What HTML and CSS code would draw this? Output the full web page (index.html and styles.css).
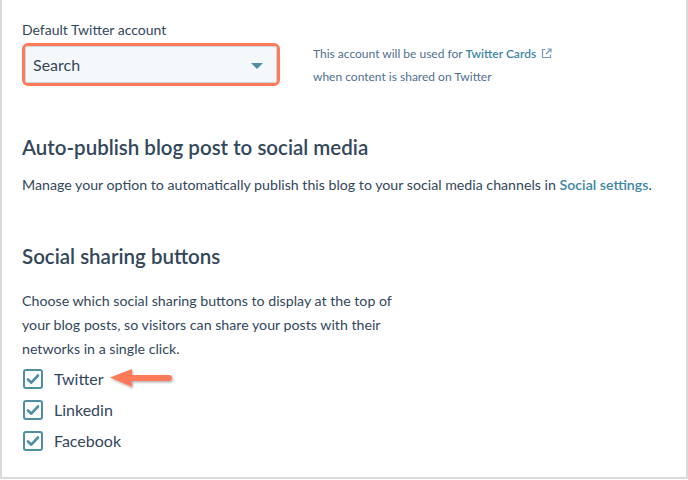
FILE: index.html
```html
<!DOCTYPE html>
<html>
<head>
<meta charset="utf-8">
<link rel="stylesheet" href="styles.css">
</head>
<body>
<div class="panel">
  <div class="account-row">
    <div class="field">
      <label class="field-label">Default Twitter account</label>
      <div class="select-wrap">
        <div class="select">
          <span>Search</span>
          <span class="caret"></span>
        </div>
      </div>
    </div>
    <div class="help">
      <p>This account will be used for <a class="link">Twitter Cards</a>
        <svg class="ext" width="11" height="11" viewBox="0 0 11 11"><path d="M4.5 1.5H1.5v8h8v-3" fill="none" stroke="#7c98b6" stroke-width="1.2"/><path d="M6.5 1h3.5v3.5M10 1L5 6" fill="none" stroke="#7c98b6" stroke-width="1.2"/></svg></p>
      <p>when content is shared on Twitter</p>
    </div>
  </div>

  <section class="section">
    <h2>Auto-publish blog post to social media</h2>
    <p class="body">Manage your option to automatically publish this blog to your social media channels in <a class="link strong">Social settings</a>.</p>
  </section>

  <section class="section social">
    <h2>Social sharing buttons</h2>
    <p class="body narrow">Choose which social sharing buttons to display at the top of your blog posts, so visitors can share your posts with their networks in a single click.</p>
    <ul class="checks">
      <li class="check-row">
        <span class="box"><svg width="14" height="12" viewBox="0 0 14 12"><path d="M2 6.5l3.3 3.2L12 2.5" fill="none" stroke="#4f8fa6" stroke-width="2.6" stroke-linecap="round" stroke-linejoin="round"/></svg></span>
        <span class="check-label">Twitter</span>
        <span class="arrow"><svg width="68" height="26" viewBox="0 0 68 26"><defs><filter id="sh" x="-20%" y="-40%" width="140%" height="180%"><feDropShadow dx="1" dy="1.5" stdDeviation="1.2" flood-color="#000" flood-opacity="0.3"/></filter></defs><path d="M3 11.5L25 3v6h37a3 3 0 0 1 0 6H25v6z" fill="#ff7a59" filter="url(#sh)"/></svg></span>
      </li>
      <li class="check-row">
        <span class="box"><svg width="14" height="12" viewBox="0 0 14 12"><path d="M2 6.5l3.3 3.2L12 2.5" fill="none" stroke="#4f8fa6" stroke-width="2.6" stroke-linecap="round" stroke-linejoin="round"/></svg></span>
        <span class="check-label">Linkedin</span>
      </li>
      <li class="check-row">
        <span class="box"><svg width="14" height="12" viewBox="0 0 14 12"><path d="M2 6.5l3.3 3.2L12 2.5" fill="none" stroke="#4f8fa6" stroke-width="2.6" stroke-linecap="round" stroke-linejoin="round"/></svg></span>
        <span class="check-label">Facebook</span>
      </li>
    </ul>
  </section>
</div>
</body>
</html>
```
FILE: styles.css
```css
* { box-sizing: border-box; }
html, body { margin: 0; padding: 0; background: #fff; }
body {
  font-family: Lato, "Open Sans", sans-serif;
  color: #33475b;
  width: 688px;
  height: 480px;
  overflow: hidden;
}
.panel {
  width: 688px;
  height: 479px;
  border-left: 2px solid #dadada;
  border-right: 2px solid #dadada;
  border-bottom: 2px solid #dadada;
  padding: 20px 0 0 20px;
}
.account-row {
  display: flex;
  align-items: flex-start;
}
.field-label {
  display: block;
  font-size: 14px;
  line-height: 20px;
  margin-bottom: 3px;
}
.select-wrap {
  border: 3px solid #ff7a59;
  border-radius: 6px;
  width: 258px;
  height: 43px;
}
.select {
  height: 100%;
  background: #f5f8fa;
  border: 1px solid #cbd6e2;
  border-radius: 3px;
  display: flex;
  align-items: center;
  justify-content: space-between;
  padding: 0 13px 0 7px;
  font-size: 16px;
}
.caret {
  width: 0; height: 0;
  border-left: 6px solid transparent;
  border-right: 6px solid transparent;
  border-top: 6px solid #4f8fa6;
  margin-top: 2px;
}
.help {
  margin-left: 33px;
  padding-top: 22px;
  font-size: 12px;
  color: #516f90;
}
.help p { margin: 0; line-height: 23px; }
.link { color: #3d86a5; }
.help .link { font-weight: 600; }
.strong { font-weight: 600; }
.ext { vertical-align: -1px; margin-left: 2px; }
.section { margin-top: 46px; }
.section h2 {
  margin: 0;
  font-size: 20.5px;
  font-weight: 600;
  line-height: 26px;
}
.body {
  margin: 13px 0 0;
  font-size: 14.2px;
  line-height: 24px;
}
.social { margin-top: 46px; }
.narrow { width: 390px; margin-top: 20px; }
.checks { list-style: none; margin: 2px 0 0; padding: 0; }
.check-row {
  display: flex;
  align-items: center;
  height: 31px;
}
.box {
  width: 20px; height: 20px;
  border: 2px solid #4f8fa6;
  border-radius: 3px;
  display: flex;
  align-items: center;
  justify-content: center;
  margin-left: 1px;
  margin-right: 11px;
}
.check-label { font-size: 16px; }
.arrow { margin-left: 3px; display: flex; }
```
